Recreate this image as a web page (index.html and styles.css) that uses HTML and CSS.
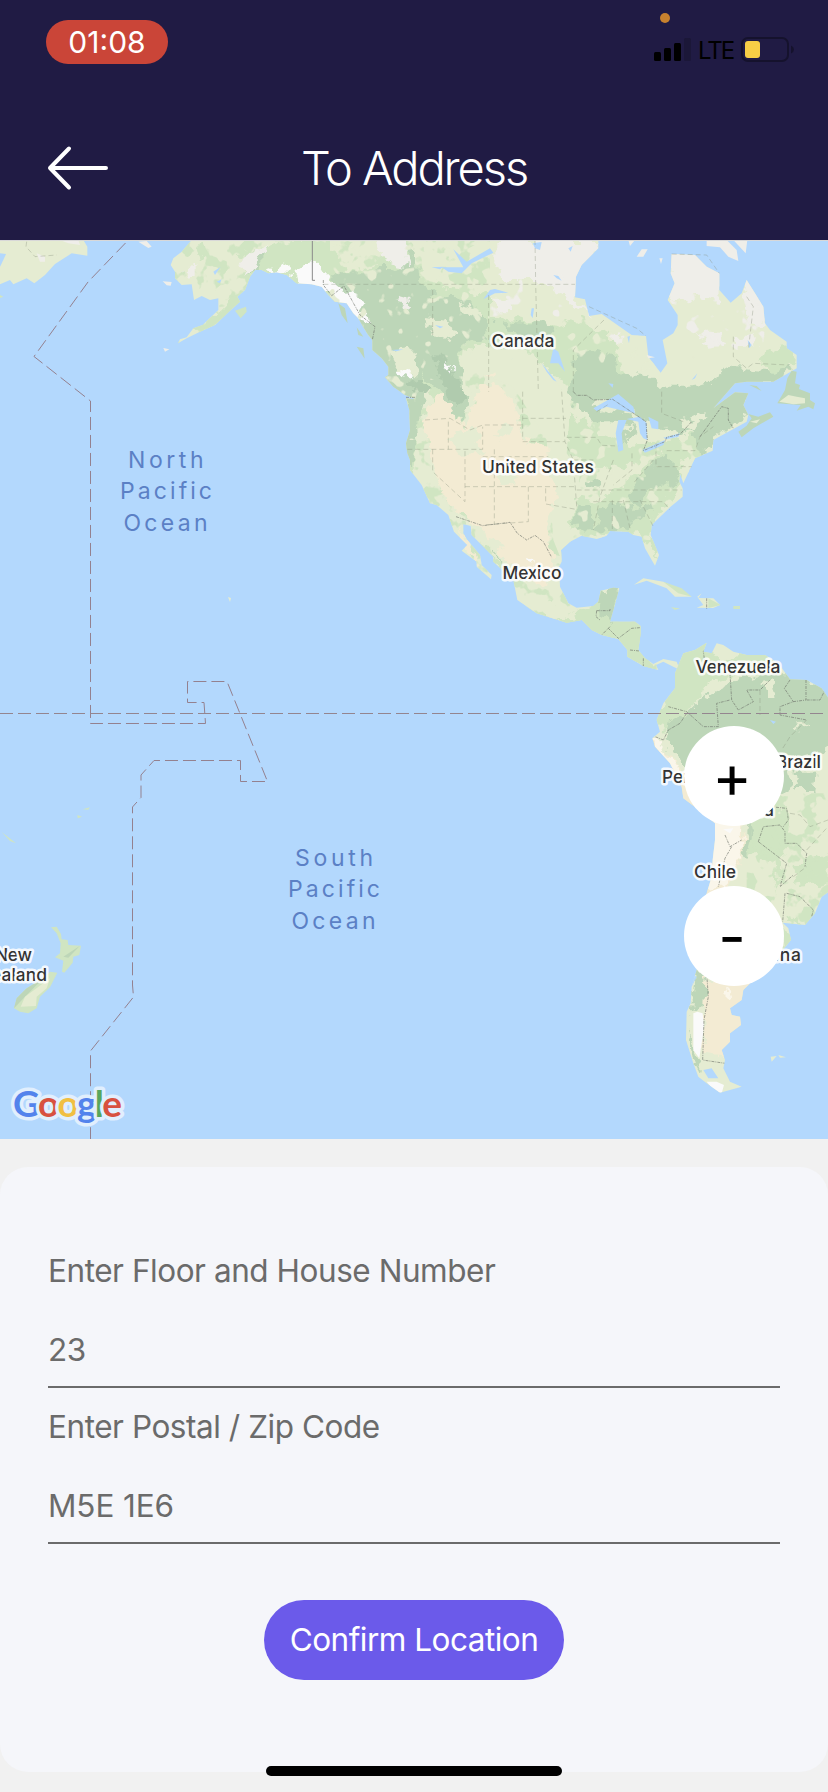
FILE: index.html
```html
<!DOCTYPE html>
<html lang="en">
<head>
<meta charset="utf-8">
<title>To Address</title>
<link rel="stylesheet" href="styles.css">
</head>
<body>
<div class="screen">
  <header class="header">
    <div class="status">
      <span class="clock">01:08</span>
      <div class="status-icons">
        <svg class="signal" width="38" height="24" viewBox="0 0 38 24">
          <rect x="0" y="14" width="7" height="9" rx="1.5"/>
          <rect x="10" y="10" width="7" height="13" rx="1.5"/>
          <rect x="20" y="5" width="7" height="18" rx="1.5"/>
          <rect class="faint" x="30" y="0" width="7" height="23" rx="1.5"/>
        </svg>
        <span class="network">LTE</span>
        <svg class="battery" width="54" height="26" viewBox="0 0 54 26">
          <rect class="shell" x="1" y="1" width="46" height="23" rx="6"/>
          <path class="cap" d="M50 8.500q3 1.500 3 4t-3 4z"/>
          <rect class="charge" x="4" y="4" width="15" height="17" rx="3"/>
        </svg>
      </div>
      <i class="mic-dot"></i>
    </div>
    <div class="nav">
      <svg class="back" width="64" height="48" viewBox="0 0 64 48"><path d="M24 4.500 5 24 24 43.500M5 24H61"/></svg>
      <h1 class="title">To Address</h1>
    </div>
  </header>

  <div class="map">
    <svg class="map-svg" width="828" height="899" viewBox="0 241 828 899">
      <defs>
        <filter id="rough" x="-5%" y="-5%" width="110%" height="110%" color-interpolation-filters="sRGB">
          <feTurbulence type="fractalNoise" baseFrequency="0.03" numOctaves="3" seed="4"/>
          <feDisplacementMap in="SourceGraphic" scale="50" xChannelSelector="R" yChannelSelector="G"/>
        </filter>
        <filter id="patchy" x="0" y="0" width="100%" height="100%" color-interpolation-filters="sRGB">
          <feTurbulence type="fractalNoise" baseFrequency="0.022" numOctaves="3" seed="9"/>
          <feColorMatrix type="matrix" values="0 0 0 0 0  0 0 0 0 0  0 0 0 0 0  14 0 0 0 -7.6"/>
          <feComposite in="SourceGraphic" operator="in"/>
        </filter>
        <filter id="speckle" x="0" y="0" width="100%" height="100%" color-interpolation-filters="sRGB">
          <feTurbulence type="fractalNoise" baseFrequency="0.025" numOctaves="2" seed="21"/>
          <feColorMatrix type="matrix" values="0 0 0 0 0  0 0 0 0 0  0 0 0 0 0  0 14 0 0 -9"/>
          <feComposite in="SourceGraphic" operator="in"/>
        </filter>
        <path id="na" d="M-565 0L-595 35-620 55-628 75-615 95-615 115-595 135-565 133-558 180-535 168-510 180-485 175-485 210-532 255-560 265-580 292-600 298-606 310-580 295-540 275-495 255-450 212-420 185-428 170-405 150-390 110-375 90-355 90-335 100-310 97-280 105-250 130-205 133-175 140-155 165-135 185-100 190-80 220-65 235-50 262-35 285-23 300-23 330 5 355 25 380 25 405 15 412 40 440 75 465 108 478 78 475 88 510 90 570 78 610 82 640 90 660 90 690 125 735 150 790 170 795 205 825 222 875 262 915 245 932 290 965 290 980 333 1018 335 1005 305 975 300 945 262 900 250 880 250 852 272 858 275 885 340 950 340 965 400 1020 412 1080 470 1120 560 1148 605 1140 635 1170 665 1185 715 1197 742 1230 742 1250 790 1278 835 1290 828 1275 850 1265 880 1280 900 1290 890 1265 850 1257 820 1272 795 1255 775 1230 782 1180 782 1158 765 1145 690 1145 700 1110 718 1045 700 1043 662 1052 655 1085 640 1098 590 1103 565 1090 540 1040 537 980 545 965 543 930 570 905 605 887 650 897 680 887 690 873 745 875 760 885 785 890 795 925 825 977 837 945 812 885 815 855 870 802 908 770 908 745 898 725 900 700 910 730 940 665 945 655 998 632 1000 600 1100 545 1105 525 1090 495 1105 460 1065 457 1000 505 1065 430 1100 425 1180 425 1250 385 1250 345 1220 325 1220 305 1170 270 1155 250 1150 200 1125 160 1100 120 1085 160 1052 188 1018 150 1018 100 980 80 945 45 875 42 872 100 884 130 863 180 893 225 893 255 880 280 848 300 862 370 842 398 805 350 798 288 755 285 665 222 627 228 615 178 585 172 588 110 605 75 655 25 655 0Z"/>
        <path id="sa" d="M345 160L345 205 310 250 290 300 300 335 277 355 285 380 330 430 365 500 370 535 410 565 465 610 465 660 458 720 455 770 440 820 425 900 410 1050 395 1100 392 1150 380 1175 378 1260 400 1330 415 1370 440 1390 480 1418 545 1400 510 1385 490 1345 495 1320 485 1290 510 1265 510 1240 543 1215 540 1190 515 1185 510 1165 545 1140 550 1110 575 1085 660 1000 693 960 685 925 668 908 735 915 765 880 785 830 806 815 806 235 785 205 740 180 690 178 655 130 615 105 560 105 520 95 490 75 470 70 455 100 430 95 440 68 405 90 370 100Z"/>
        <clipPath id="naClip"><use href="#na"/></clipPath>
        <clipPath id="saClip"><use href="#sa"/></clipPath>
      </defs>

      <rect class="water" x="0" y="240" width="828" height="900"/>

      <!-- Russian coast, Aleutians and other northern islands -->
      <g transform="translate(0 240) scale(.33333)">
        <path class="land" d="M0 0H250L262 20V47L215 40 165 72 135 105 103 130 80 115 40 133 30 120 0 133Z"/>
        <path class="tundra" d="M110 40L135 50 135 65 120 65ZM180 0H235L240 15 205 10ZM415 5L440 3 455 20 445 24ZM488 124L515 126 512 137 500 136ZM490 324L508 328 495 335Z"/>
        <path class="water" d="M0 40L18 42 10 60 0 80Z"/>
        <path class="state" d="M80 5L78 20 105 50 170 45"/>
        <path class="light" d="M705 212L738 200 740 215 722 235ZM0 165L10 170 0 174Z"/>
        <path class="forest" d="M1015 190L1035 205 1043 250 1025 225ZM1070 262L1090 290 1075 285ZM1070 320L1090 325 1094 356Z"/>
      </g>

      <g transform="translate(380 240) scale(.33333)">
        <use class="land" href="#na"/>
        <g clip-path="url(#naClip)">
          <path class="light" filter="url(#patchy)" d="M-640 -10H330V300H660V1000H830V1300H-640Z"/>
          <path class="land" d="M250 310L320 320 460 340 540 440 570 520 560 640 600 700 580 860 560 1000 520 900 500 600 400 440 300 400 240 400Z"/>
          <g filter="url(#rough)">
            <path class="light" d="M-550 20L-530 10-520 40-540 60ZM-430 40L-250 0-150 0-100 100 0 70 80 20 130 120 330 170 330 230 420 240 530 260 590 235 700 300 740 410 660 480 540 430 460 330 310 320 240 330 250 540 200 560 140 440 70 520 120 600 100 700 80 700 60 560 -20 400ZM380 1080L410 1100 470 1120 560 1130 640 1100 660 1040 800 1140 830 1300 560 1160ZM-410 160L-440 220-540 275-560 260-470 210ZM570 520L640 570 760 610 900 600 970 560 970 640 900 660 830 640 740 680 640 690 570 640ZM740 730L840 640 900 660 910 720 860 790 810 860 840 960 780 890 770 880 640 890 570 870 590 770 640 780 690 760ZM1140 370L1150 330 1230 320 1260 360 1180 410ZM330 950L380 980 400 1040 350 990Z"/>
            <path class="forest" d="M-410 90L-380 40-350 30-350 60-390 100ZM-60 100L0 90 30 90 80 60 85 20 110 40 115 130 170 170 230 175 290 200 325 240 320 300 290 310 250 300 235 340 245 400 245 450 268 475 245 540 215 520 190 480 165 440 120 400 130 450 130 500 110 560 115 600 95 690 70 640 75 480 -25 410-60 280-95 190-160 100ZM580 340L640 330 710 350 715 400 780 405 840 440 920 440 1000 430 1010 400 1060 385 1180 395 1240 380 1180 430 1110 430 1105 520 1000 600 960 650 940 570 900 580 850 570 760 510 690 470 640 500 740 520 770 560 690 550 640 550 570 480ZM745 760L790 700 850 640 900 680 890 725 800 750 770 800ZM590 790L630 790 640 870 580 875ZM645 870L660 810 700 780 750 810 830 780 820 800 740 860 700 880ZM375 250L500 250 530 270 490 310 400 290ZM660 1050L720 1040 695 1150 650 1120ZM620 720L660 730 650 750 620 740ZM730 570L770 560 760 600 730 610ZM340 930L360 930 370 980Z"/>
            <path class="pine" d="M160 345L190 350 215 380 245 440 255 480 225 500 200 470 175 400ZM80 430L130 410 140 450 100 450Z"/>
            <path class="land" d="M135 240L200 245 225 280 205 300 140 265ZM30 330L90 320 110 350 105 410 60 390ZM900 670L940 660 920 720 900 700ZM740 590L800 570 790 610 750 620ZM900 550L960 520 980 530 930 570ZM240 190L300 210 300 225 250 215ZM430 1080L510 1080 580 1130 550 1145 440 1100Z"/>
            <path class="tundra" d="M340 0H660L585 172 640 240 560 180 500 140 480 120 370 120 340 70ZM330 170L390 170 390 220 350 220ZM870 20L950 30 1025 90 1020 180 950 170 860 190ZM1085 160L1100 90 1160 200 1160 260 1105 250ZM960 280L1020 285 1030 315 980 320ZM1060 290L1120 290 1130 320 1070 320ZM700 285L730 290 725 320 700 315ZM-10 0H70L85 75 40 70 0 50ZM-590 90L-550 70-550 110-580 120ZM-420 60L-340 10-360 50-400 110ZM50 170L85 180 90 205 60 195Z"/>
            <path class="desert" d="M145 500L180 460 215 520 260 560 300 430 330 435 400 480 430 600 500 620 510 700 535 770 500 860 520 950 500 1040 440 1020 380 960 300 860 250 830 190 770 150 650 130 570ZM320 400L350 405 340 420ZM245 860L300 980 340 1020 290 970 240 920Z"/>
            <path class="land" d="M250 570L290 570 310 640 240 650 200 600ZM345 560L400 560 390 590 350 600ZM350 700L400 690 410 730 360 740ZM310 890L350 900 370 960Z"/>
            <path class="snow" d="M-340 90L-280 70-270 105-330 100ZM-260 100L-190 60-160 110-110 150-60 170-30 250-90 230-120 180-170 150-250 135ZM45 380L95 400 95 420 60 410ZM195 365L220 380 210 395ZM440 950L465 965 455 980Z"/>
          </g>
          <path class="land" filter="url(#speckle)" d="M-150 0H340V420H140V600H-150ZM540 180H960V400H540ZM560 560H980V900H560Z"/>
          <path class="tundra" filter="url(#speckle)" d="M330 100H560V240H330ZM870 180H1200V330H870Z"/>
          <path class="water" d="M220 28L260 65 330 25 340 38 275 70 245 100 205 95 185 82 250 82ZM155 82L190 80 180 88ZM310 178L330 150 345 147 385 158 345 160ZM458 10L485 6 480 30 465 25ZM520 105L535 108 545 122 530 115ZM565 25L578 18 572 35ZM455 205L462 205 458 235 452 225ZM520 325L535 335 555 395 535 370 510 370ZM485 370L530 425 520 420 500 395ZM165 255L190 260 180 265ZM390 365L405 345 398 355ZM640 505L715 462 760 500 765 520 720 510 680 500 650 513ZM715 540L740 540 725 580 730 630 715 635 707 580ZM740 537L780 530 800 550 802 600 790 595 780 580 775 545ZM805 530L835 545 835 568 815 565ZM787 630L855 600 850 615 795 638ZM850 593L900 580 895 590 860 598ZM685 430L700 432 698 443ZM935 420L952 400 945 415ZM1103 300L1115 315 1108 325ZM742 290L750 288 747 310ZM35 330L70 328 50 334ZM-500 95L-478 80-495 105ZM-490 125L-475 118-480 130Z"/>
        </g>
        <!-- islands around the continent -->
        <path class="tundra" d="M745 0H765L750 18ZM770 50L785 28 803 28 790 50ZM838 55L848 55 843 72ZM980 0H1040L1070 30 1075 63 1045 50 1020 22 980 18ZM1060 0H1102L1097 40ZM800 345L825 352 805 355Z"/>
        <path class="forest" d="M1192 490L1215 450 1222 415 1235 392 1250 395 1245 430 1260 435 1257 447 1290 460 1290 480 1305 490 1300 508 1285 500 1250 512 1262 495ZM1108 435L1130 438 1145 453ZM1075 575L1100 557 1115 535 1105 522 1135 530 1170 517 1180 530 1120 565 1085 592Z"/>
        <path class="land" d="M1198 485L1225 465 1250 470 1275 475 1275 490 1240 493ZM1110 545L1140 538 1130 550ZM762 1034L790 1015 850 1025 905 1050 935 1070 885 1070 860 1045 800 1022ZM952 1070L965 1060 955 1074 1000 1075 1020 1095 1000 1104 950 1103 970 1095Z"/>
        <path class="light" d="M873 1102L900 1105 885 1110ZM1060 1098H1080V1107H1060ZM850 1025L905 1045 935 1070 895 1060ZM985 1075L1022 1095 985 1104Z"/>
        <path class="state" d="M-170 133H585M158 150V290M326 165V455M465 0L467 130 475 455M428 455V600M545 455L555 605M82 628H308V560M135 540L210 535 270 570 308 555H428M428 535H558M205 545V628M158 628V695L255 785V628M255 740H588M343 628V855M428 605H555L580 660 590 800M308 650H505M445 740V845L310 855M497 745V792L588 808M560 592H650L665 616 715 618M590 750H905M640 785H850L870 810M580 660H640M845 455V520L910 545M672 240L580 330 580 465M700 660L660 770 640 870M697 780V875M730 780L750 865M780 780L820 860M756 640V690L700 735M828 610V680H935M860 632H945L960 590 1000 560M820 660L760 730M1100 170L1120 200 1105 330M1060 290L1060 350 1100 385 1120 370 1225 375M627 200L770 265 798 288M875 42L980 45 1018 100M650 515L690 490"/>
        <path class="nation" d="M-170 120V135L-145 167-108 138-60 225-15 260-23 300M78 472H108M580 455L590 466H620L640 480 698 478 798 545 802 600 790 632 855 605 860 592 900 583 935 545M960 590L1025 500 1045 505 1045 540 1060 565M228 830L308 857 390 847 412 880 440 900 465 886 490 905 515 952M650 1112H690V1105M690 1160L665 1185M685 1165L715 1195 755 1165 780 1163M750 1230L778 1233M790 1255V1278M650 1112L648 1130 660 1140M980 1075V1107"/>
        <path class="alaska" d="M-203 0V121H-195"/>
      </g>

      <g transform="translate(560 620) scale(.33333)">
        <use class="land" href="#sa"/>
        <g clip-path="url(#saClip)">
          <g filter="url(#rough)">
            <path class="light" d="M330 90L440 60 470 120 600 90 660 130 640 160 520 160 450 200 380 280 320 330 270 320 330 220ZM570 600L680 560 690 680 660 710 650 830 640 720 560 700ZM700 740L806 700 806 790 720 800ZM670 900L700 890 730 920ZM660 920L700 940 680 1000Z"/>
            <path class="forest" d="M440 225L520 180 620 160 700 160 830 220 830 360 780 400 720 410 660 400 690 500 650 520 560 520 440 520 390 460 340 400 320 350 330 300 380 280ZM700 455L770 455 760 510 710 510ZM570 600L580 640 560 720 545 700ZM405 1040L445 1060 440 1150 395 1180 400 1110ZM380 1230L400 1280 420 1350 400 1340Z"/>
            <path class="land" d="M610 185L640 180 650 230 620 240ZM695 320L750 310 740 325 700 325ZM440 190L510 170 500 190 430 230Z"/>
            <path class="desert" d="M270 350L330 400 360 470 460 560 555 610 550 680 520 780 500 830 430 1060 450 1090 620 1080 560 1120 560 1240 490 1310 430 1300 440 1060 420 820 450 640 350 530Z"/>
            <path class="salt" d="M270 345L300 360 350 450 350 480ZM450 600L550 620 545 690 510 790 420 820 440 730ZM495 1100L520 1120 500 1135Z"/>
          </g>
          <path class="light" filter="url(#patchy)" d="M600 520H806V920H560V700Z"/>
          <path class="snow" d="M400 1180L412 1175 428 1180 432 1215 428 1250 418 1315 400 1290ZM440 1385L470 1385 492 1395 485 1420 460 1410ZM490 628L520 625 510 640Z"/>
          <path class="water" d="M630 300L648 305 640 312ZM430 1350L455 1345 475 1375 445 1375ZM385 1060L410 1070 395 1100Z"/>
          <path class="nation" d="M445 75L430 95 435 130M510 160L515 240 535 270 580 245 560 210 600 210 630 180M325 260L380 275 430 320 475 320 470 250 510 240M380 280L360 310 325 330 310 360 285 350M690 180L673 205 700 245 660 260 660 285 740 300M738 180V240L700 245M740 240L780 240 795 210M495 645L510 680 545 660M515 680L495 715 475 800 M595 665L610 620 660 615 675 635V670L710 670 740 700 735 740M595 665L680 730 660 800 700 765M675 820L668 905M680 820L720 830 760 870 755 890M440 1060L445 1130 432 1200 428 1320 495 1330M515 1415H535M630 560L680 565 685 600 670 620M340 150V130L325 115"/>
          <path class="state" d="M600 210V285M740 300L690 350 665 390M690 580L720 585 750 620 804 600M740 690L804 620M700 770L740 740"/>
        </g>
        <path class="land" d="M632 1310L650 1308 635 1325ZM655 1305L678 1312 660 1313Z"/>
      </g>

      <!-- New Zealand and Pacific islands -->
      <g transform="translate(0 660) scale(.33333)">
        <path class="light" d="M153 802L170 800 183 822 185 838 203 840 205 855 243 857 238 885 220 890 218 908 193 938 186 935 190 902 165 892 180 880 182 850 170 820ZM42 1045L50 1015 80 985 130 955 150 935 172 938 150 982 120 1010 110 1045 85 1060 60 1055ZM5 516L48 550 30 543ZM232 465L246 470 233 475ZM248 448L270 442 265 449Z"/>
        <path class="forest" d="M190 890L240 857 205 893ZM42 1045L50 1015 80 985 130 955 75 1010Z"/>
        <path class="land" d="M75 1010L150 955 140 985 110 1010 108 1038 62 1040Z"/>
      </g>
      <path class="land" d="M228 597l3 1-1 4z"/>

      <path class="dateline" d="M125.500 243L88 282 34 356.500 90.500 401V723.500H205.500L204 702.500H187.500V681.500H227L267.500 781.500H240.500V760.500H154L141 775V797.500L132.500 807V985L133.500 997 90.500 1051V1140"/>
      <path class="dateline equator" d="M0 713.500H828"/>

      <g class="ocean">
        <text x="128" y="467.500" textLength="75.500">North</text>
        <text x="120" y="499" textLength="92">Pacific</text>
        <text x="123.500" y="530.500" textLength="84">Ocean</text>
        <text x="295" y="865.500" textLength="78">South</text>
        <text x="288" y="897" textLength="92">Pacific</text>
        <text x="291.500" y="928.500" textLength="84">Ocean</text>
      </g>
      <g class="country">
        <text x="491.500" y="347" textLength="63">Canada</text>
        <text x="482" y="473" textLength="112">United States</text>
        <text x="502.500" y="579" textLength="59">Mexico</text>
        <text x="695.500" y="673" textLength="85">Venezuela</text>
        <text x="776" y="768" textLength="45">Brazil</text>
        <text x="662" y="783" textLength="38">Peru</text>
        <text x="713" y="816" textLength="61">Bolivia</text>
        <text x="694" y="878" textLength="42">Chile</text>
        <text x="713" y="961" textLength="88">Argentina</text>
        <text x="-5" y="961" textLength="37">New</text>
        <text x="-20" y="981" textLength="67">Zealand</text>
      </g>
      <text class="google" x="13" y="1117" textLength="109"><tspan class="g-blue">G</tspan><tspan class="g-red">o</tspan><tspan class="g-yellow">o</tspan><tspan class="g-blue">g</tspan><tspan class="g-green">l</tspan><tspan class="g-red">e</tspan></text>
    </svg>
    <div class="zoom-controls">
      <button class="zoom-btn">+</button>
      <button class="zoom-btn">-</button>
    </div>
  </div>

  <main class="panel">
    <label class="label">Enter Floor and House Number</label>
    <div class="value">23</div>
    <label class="label">Enter Postal / Zip Code</label>
    <div class="value postal">M5E 1E6</div>
    <button class="confirm"><span>Confirm Location</span></button>
  </main>
  <div class="home-indicator"></div>
</div>
</body>
</html>
```
FILE: styles.css
```css
* { box-sizing: border-box; }
body { margin: 0; font-family: Inter, "Liberation Sans", sans-serif; }
button { border: 0; padding: 0; font-family: inherit; }
.screen { position: relative; width: 828px; height: 1792px; background: #f1f1f1; overflow: hidden; }

.header { height: 240px; background: #201b44; color: #fff; }
.status { position: relative; height: 96px; padding: 20px 33px 0 46px; display: flex; justify-content: space-between; align-items: flex-start; }
.clock { width: 122px; height: 44px; border-radius: 22px; background: #ca4538; font-size: 30px; line-height: 45px; text-align: center; font-weight: 400; letter-spacing: 0; }
.status-icons { display: flex; align-items: flex-start; padding-top: 17px; }
.signal { display: block; margin-top: 1px; }
.signal .faint { fill: #1b1738; }
.network { width: 37px; margin: 1px 0 0 6px; color: #000; font-size: 24px; line-height: 26px; letter-spacing: -2px; }
.battery { display: block; margin-left: 6px; }
.shell { fill: none; stroke: #15122d; stroke-width: 2; }
.cap { fill: #15122d; }
.charge { fill: #f8ce46; }
.mic-dot { position: absolute; left: 660px; top: 13px; width: 10px; height: 10px; border-radius: 50%; background: #c7812e; }
.nav { position: relative; height: 144px; display: flex; justify-content: center; padding-top: 43px; }
.back { position: absolute; left: 45px; top: 48px; fill: none; stroke: #fff; stroke-width: 4; stroke-linecap: round; stroke-linejoin: round; }
.title { margin: 0; font-size: 47px; line-height: 58px; font-weight: 300; letter-spacing: -2.1px; }

.map { position: relative; height: 899px; border-top: 1px solid #d8d8d8; overflow: hidden; }
.map-svg { display: block; }
.water { fill: #b3d8fd; }
.land { fill: #e5ecd2; }
.light { fill: #d0e5c2; }
.forest { fill: #bdd6b8; }
.pine { fill: #b0cbae; }
.tundra { fill: #efeee9; }
.desert { fill: #f3ebd3; }
.salt { fill: #faf6ea; }
.snow { fill: #fafafa; }
.state { fill: none; stroke: #87917e; stroke-opacity: .55; stroke-width: 2; stroke-dasharray: 15 9; }
.nation { fill: none; stroke: #6f756c; stroke-opacity: .8; stroke-width: 2.400; stroke-dasharray: 9 3 3 3; }
.alaska { fill: none; stroke: #8b8b8b; stroke-width: 3; }
.dateline { fill: none; stroke: #94818f; stroke-width: 1; stroke-dasharray: 13 5; }
.equator { stroke: #94858f; }
.ocean { fill: #5b80c5; font-size: 23px; }
.country { fill: #333; font-size: 17.500px; font-weight: 500; paint-order: stroke; stroke: #fff; stroke-opacity: .85; stroke-width: 5px; stroke-linejoin: round; }
.google { font-family: Lato, sans-serif; font-size: 37px; font-weight: 700; paint-order: stroke; stroke: #e1effd; stroke-width: 7px; stroke-linejoin: round; }
.g-blue { fill: #5383ec; }
.g-red { fill: #d85140; }
.g-yellow { fill: #f1bf42; }
.g-green { fill: #58a65c; }
.zoom-controls { position: absolute; left: 684px; top: 485px; display: flex; flex-direction: column; gap: 60px; }
.zoom-btn { width: 100px; height: 100px; border-radius: 50%; background: #fff; color: #000; font-size: 60px; line-height: 100px; font-weight: 400; padding-right: 4px; }

.panel { height: 605px; margin-top: 28px; padding: 82px 48px 0; border-radius: 28px; background: #f5f6fa; color: #6b6b6b; display: flex; flex-direction: column; }
.label { font-size: 31.500px; line-height: 44px; letter-spacing: -.45px; }
.value { height: 95px; padding-top: 35px; border-bottom: 2px solid #6b6b6b; margin-bottom: 17px; font-size: 31.500px; line-height: 44px; letter-spacing: -.4px; }
.postal { letter-spacing: -.1px; }
.confirm { align-self: center; width: 300px; height: 80px; margin-top: 39px; border-radius: 40px; background: #6b5aea; color: #fff; font-size: 31.500px; line-height: 80px; letter-spacing: -.5px; }
.home-indicator { position: absolute; left: 266px; top: 1766px; width: 296px; height: 10px; border-radius: 5px; background: #000; }
```
